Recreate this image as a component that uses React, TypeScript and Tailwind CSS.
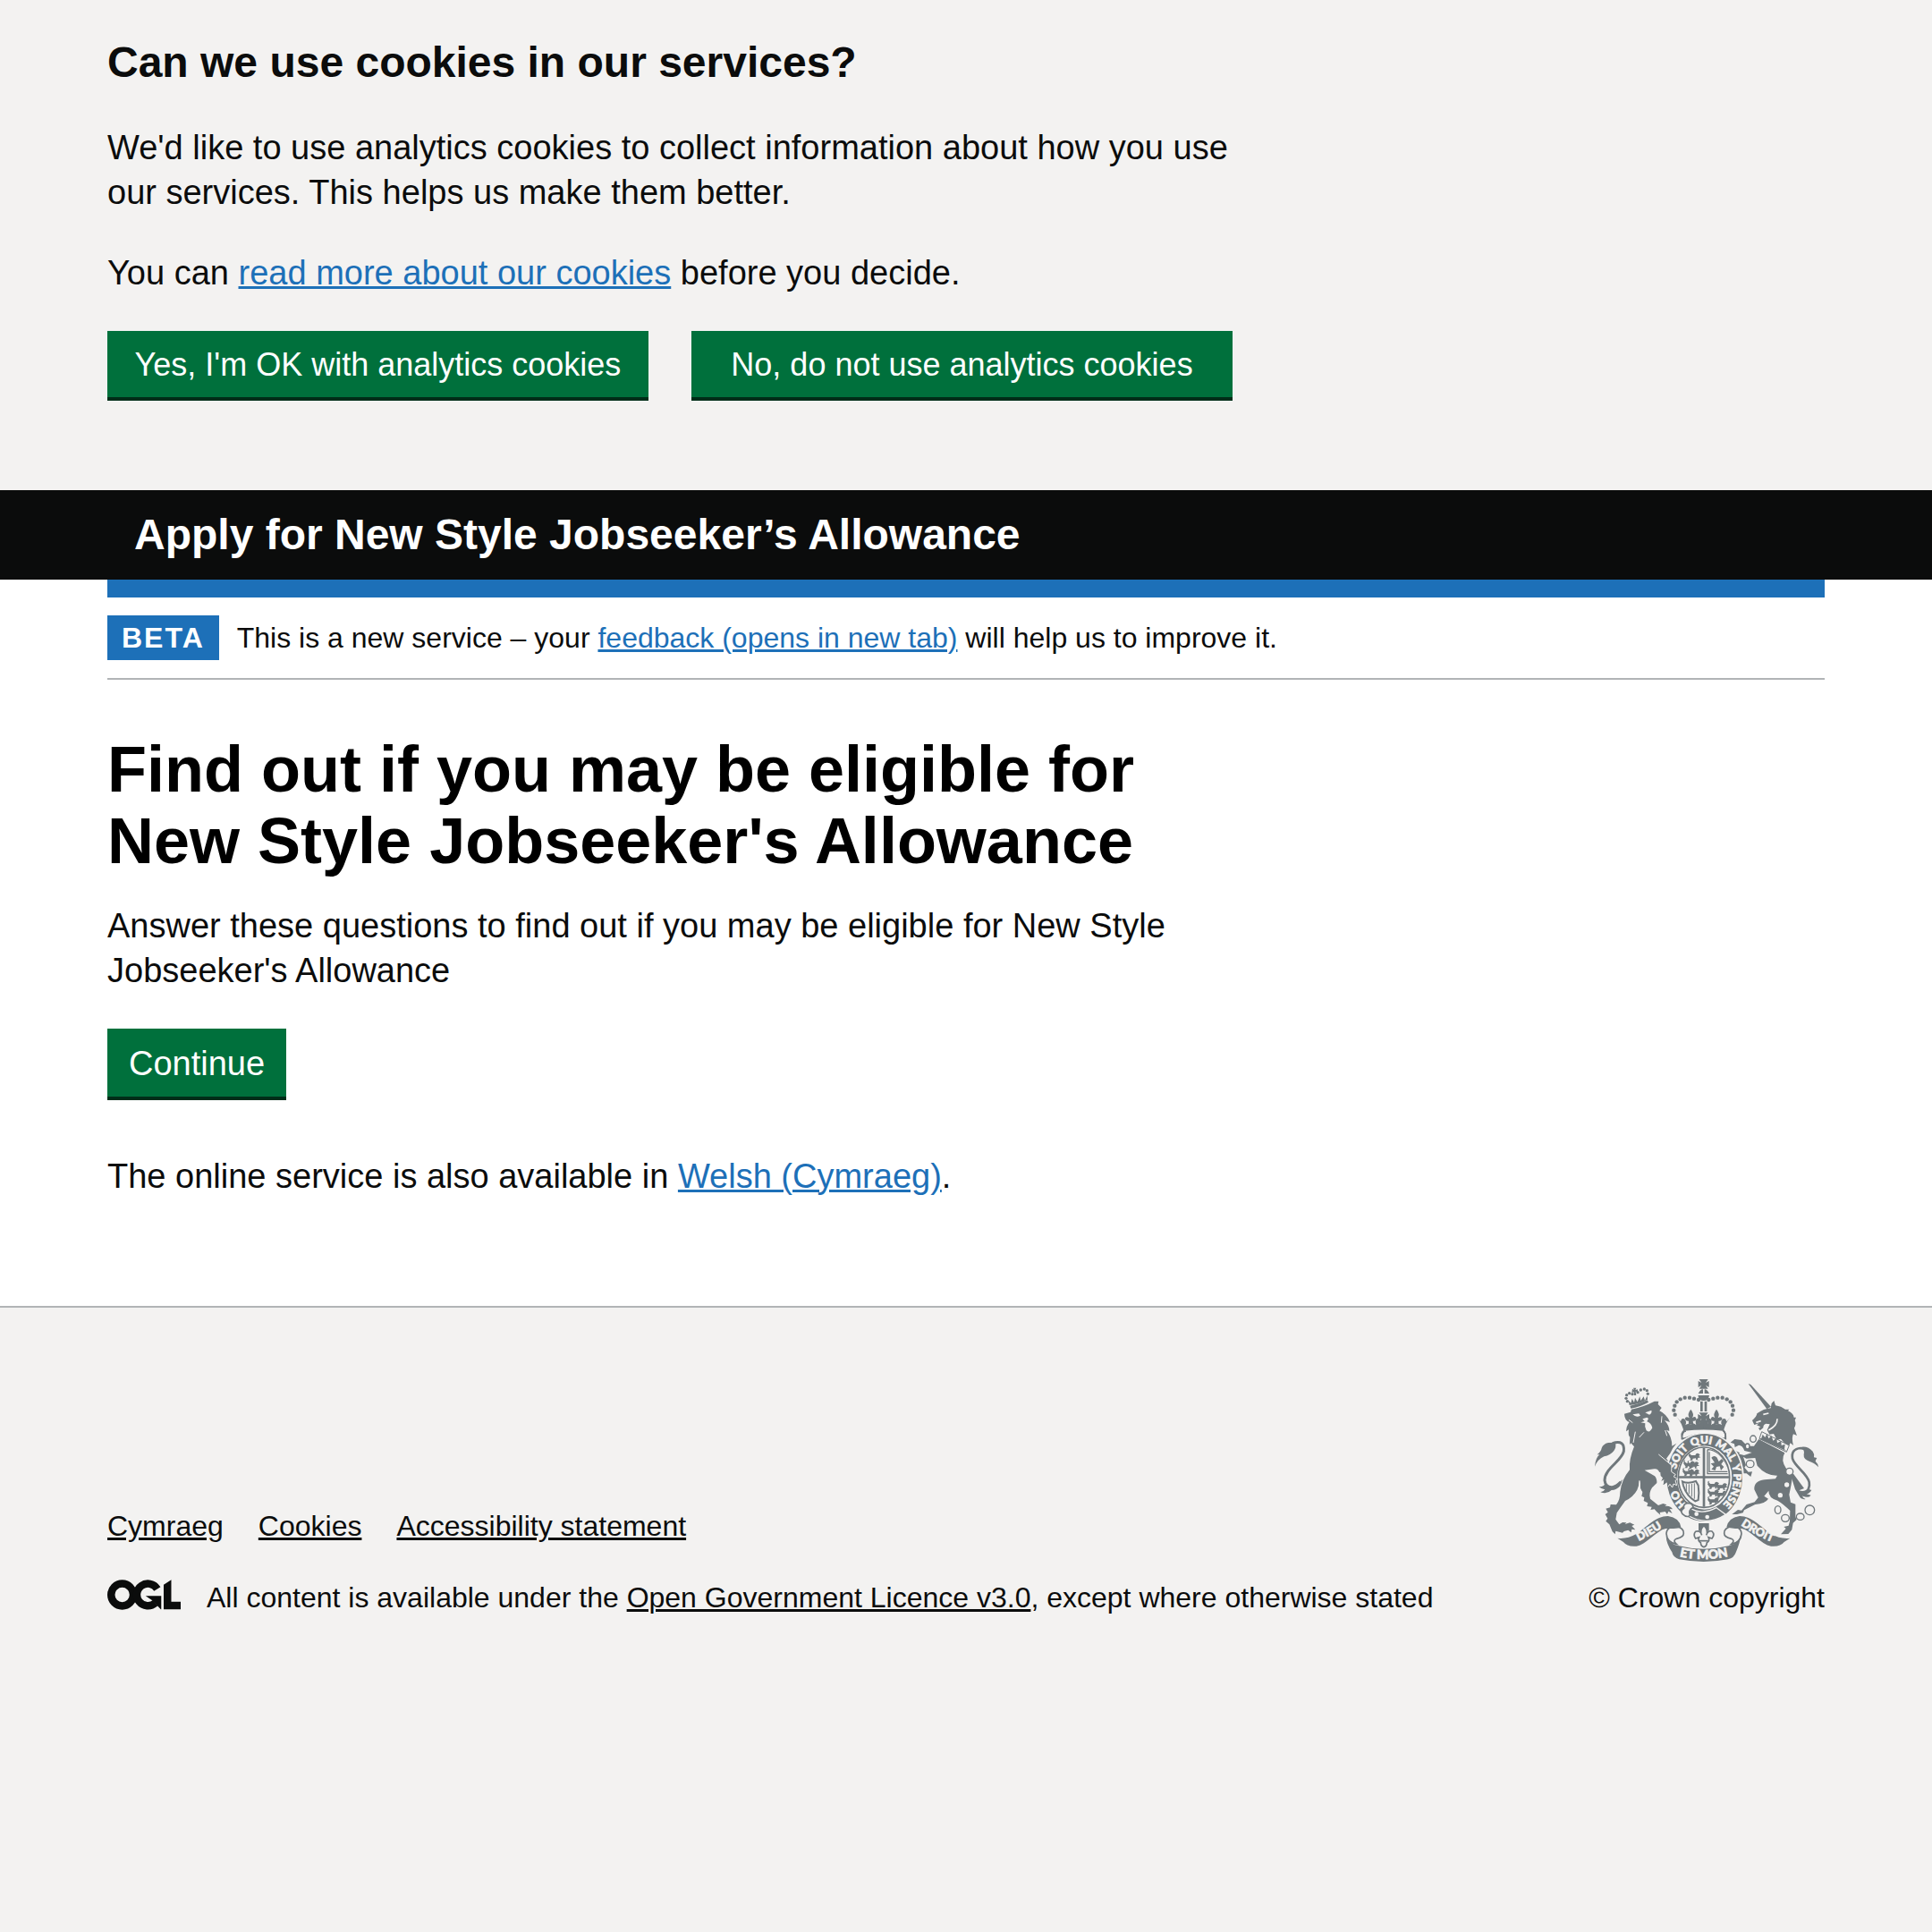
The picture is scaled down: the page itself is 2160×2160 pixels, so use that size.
import React from "react";

const INK = "#6f777b";
const PAPER = "#f3f2f1";

function OglLogo() {
  return (
    <svg aria-label="Open Government Licence" role="img" viewBox="0 0 483 196" className="h-[34px] w-[82px] shrink-0" fill="none" stroke="#0b0c0c" strokeWidth="50">
      <circle cx="98" cy="98" r="73" />
      <path d="M329 59A73 73 0 1 0 316 152" />
      <path d="M252 106h103v88h-3l-54 -58z" fill="#0b0c0c" stroke="none" />
      <path d="M371 32L421 0V143H483V194H371z" fill="#0b0c0c" stroke="none" />
    </svg>
  );
}

const PEARLS = [[387, 105], [372, 101], [357, 98], [341, 98], [326, 103], [314, 112], [307, 125], [304, 140], [308, 155]];

function CrownHalf() {
  return (
    <g>
      {PEARLS.map(([x, y]) => (
        <circle key={x + "-" + y} cx={x} cy={y} r="6.5" />
      ))}
      <path d="M314 163L327 178Q330 164 339 169Q349 178 343 190Q352 182 361 189Q371 180 379 190Q374 174 382 168Q391 165 398 177L388 184L405 180V208Q360 205 337 213Q334 186 314 163z" />
      <path d="M361 137Q374 153 366 166Q378 157 380 170Q378 178 368 176L370 188H353L354 176Q344 178 341 169Q344 158 356 166Q348 152 361 137z" />
    </g>
  );
}

function LionRow({ x, y }: { x: number; y: number }) {
  return (
    <path
      d={`M${x} ${y + 4}q5 -7 10 -1h13q3 -8 10 -6l6 4l-4 5l6 4l-9 2l-2 5l6 2h-10l-1 -6l-10 1l-2 6h-9l4 -4l-3 -5zM${x + 2} ${y + 2}q-4 -8 4 -9q-4 5 1 8z`}
    />
  );
}

function RoyalArms() {
  return (
    <svg aria-hidden="true" viewBox="39 36 750 612" className="h-[204px] w-[250px]" fill={INK} stroke="none">
      <defs>
        <path id="garter" d="M407 480A98 114 0 0 1 407 252A98 114 0 0 1 407 480" />
        <path id="dieu" d="M172 586Q225 562 279 525" />
        <path id="etmon" d="M308 627Q404 652 502 626" />
        <path id="droit" d="M517 518Q580 562 646 587" />
        <clipPath id="shield">
          <ellipse cx="405" cy="365" rx="84" ry="99" />
        </clipPath>
      </defs>

      {/* lion's tail */}
      <path d="M98 251Q141 238 136 278C128 312 72 335 72 375Q75 400 98 398Q112 395 126 380" fill="none" stroke={INK} strokeWidth="9" />
      <path d="M39 329Q42 298 55 289L47 289Q60 279 62 267Q67 253 84 249L108 248Q112 263 103 276Q92 291 70 295Q48 305 39 329z" />
      <path d="M75 385Q69 398 53 397Q63 405 73 406Q68 414 58 415Q80 423 95 408Q112 408 124 394L132 372Q96 412 75 385z" />

      {/* lion */}
      <path d="M138 152L159 146L162 137Q202 129 239 110L253 110L251 120L263 132L256 142Q280 153 291 180L273 174Q290 193 289 210L279 206Q298 229 298 260L313 251Q300 265 292 284L279 302L294 320L295 345L310 357L302 363L317 371L308 375L314 392L303 386L300 398L291 388L284 397L281 382L269 390L272 372L262 378L270 360L260 352L270 347L256 348Q250 334 238 337L206 341Q226 352 240 361Q248 370 247 384L231 400Q219 418 225 437L252 459L268 453L280 457L274 462Q293 459 300 472L290 471L299 486L286 479L282 489L275 480L257 483L259 491Q246 482 239 472L226 474L230 464L214 462L217 451L203 444L205 433L196 428L199 414L191 402L192 376L181 407Q169 430 141 444L126 465L113 484L109 506L121 523L132 516L145 517L140 522L157 517L172 524L163 528L175 541L163 539L161 550L151 542L137 546L132 551L109 545L107 556L98 547L88 523L76 512L82 503L74 489L83 482L76 470L90 466L92 456L111 457Q124 441 124 414Q128 374 156 340Q153 305 171 262L160 250L156 256L157 230Q150 226 153 205L144 211Q145 192 155 180Q139 174 138 152z" />
      <path d="M166 154L187 151L192 158Q178 166 166 154zM208 148L229 140Q232 149 222 155z" fill={PAPER} />
      <path d="M199 169L214 164L219 168L214 178Q228 183 232 199Q223 218 212 208Q205 196 208 184L193 181L206 177z" fill={PAPER} />
      <path d="M189 376Q186 397 197 421" fill="none" stroke={PAPER} strokeWidth="4" />
      <path d="M175 212L168 249M204 214L188 231M264 160L262 182M153 172L166 182M275 207L281 226" fill="none" stroke={PAPER} strokeWidth="3" />

      {/* lion's crown */}
      <g>
        <path d="M157 125Q184 120 215 106L219 113Q188 130 160 134z" />
        <path d="M155 123L151 106L160 116L164 101L171 114L174 98L182 112L190 94L193 108L203 94L207 107L215 91L216 104Q187 120 155 123z" />
        <path d="M165 68L171 72L168 65H178L175 72L183 70V79L176 77L178 90H171L170 79L163 81z" />
        {[[144, 100], [146, 89], [155, 83], [165, 86], [183, 80], [193, 72], [205, 69], [214, 74], [217, 85], [148, 110]].map(([x, y]) => (
          <circle key={x} cx={x} cy={y} r="5" />
        ))}
      </g>

      {/* unicorn's tail */}
      <path d="M737 427Q763 406 758 381C750 350 710 330 702 302Q697 270 729 267L752 272" fill="none" stroke={INK} strokeWidth="8" />
      <path d="M732 263Q754 260 770 278Q777 288 774 298L784 300Q780 306 779 311Q789 320 789 331Q775 316 760 312Q738 305 740 288Q744 276 732 263z" />
      <path d="M724 409Q744 416 757 399Q757 408 766 407Q762 417 749 421L764 425Q754 437 736 427Q736 435 746 438Q731 441 724 427L711 405L697 361L704 352L741 402z" />

      {/* unicorn's head */}
      <path d="M554 51L562 54L630 128L616 136z" />
      <path d="M567 174Q583 160 583 151Q605 135 629 133L632 117L640 108L645 124Q665 127 678 137L691 137L687 142Q705 150 707 164L714 164L710 174Q716 186 708 200L717 225L705 220Q698 231 705 258L695 250L690 260Q673 251 663 236L650 240L639 219L625 221L617 206L626 187L613 185Q603 189 604 199L593 208L588 200L595 196L582 190L590 184L574 189z" />
      <path d="M651 169Q652 191 622 207M604 154L622 150M580 181L596 176" fill="none" stroke={PAPER} strokeWidth="5" />

      {/* collar */}
      <path d="M599 212L691 258L682 280L591 235z" fill={PAPER} stroke={INK} strokeWidth="3" />
      <path d="M598 233L602 221L610 231L617 218L622 235L632 226L637 242L649 233L651 250L664 243L665 258L677 254L675 271L682 277L592 237z" />

      {/* unicorn's body and legs */}
      <path d="M589 237L676 283Q662 307 680 334L703 358L697 394L691 423L696 449L712 455V497L716 507L704 518L700 541L688 555L663 556L680 537L673 531L689 527L693 512L694 477Q671 454 652 443Q621 434 622 410L607 428L621 437Q611 453 577 456L540 475L536 484L516 489H499L519 474L531 476L548 456L575 448L587 433L574 406Q572 377 608 373L645 370L651 359Q613 360 584 326L577 300L547 302L537 296L546 324L541 332L554 347L567 346L562 363L548 352L532 352L520 337L524 329L510 322L519 310L508 298L519 286L540 291L566 282L541 276Q534 257 522 257L509 264L507 253L494 248L508 237L531 240L551 260L573 260z" />
      <path d="M500 270L525 283L513 300L495 285z" />

      {/* chain */}
      <g fill={PAPER} stroke={INK} strokeWidth="4">
        <ellipse cx="570" cy="236" rx="10" ry="11" />
        <ellipse cx="551" cy="261" rx="7" ry="9" />
        <ellipse cx="560" cy="320" rx="13" ry="12" />
        <circle cx="692" cy="346" r="12" />
        <circle cx="683" cy="390" r="10" />
        <circle cx="661" cy="425" r="10" />
        <ellipse cx="653" cy="474" rx="10" ry="13" />
        <ellipse cx="678" cy="502" rx="13" ry="12" />
        <ellipse cx="728" cy="497" rx="13" ry="11" />
        <circle cx="760" cy="475" r="16" />
      </g>

      {/* crown */}
      <path d="M389 36H419L411 48L422 42V63L411 56L419 68H389L397 56L386 63V42L397 48z" />
      <path d="M398 70H402V84H386Q388 76 398 70zM407 70H411Q421 76 423 84H407zM385 90H423Q420 108 404 108Q388 108 385 90z" />
      <path d="M393 110H401V144H393zM407 110H415V144H407z" />
      <CrownHalf />
      <g transform="translate(808 0) scale(-1 1)">
        <CrownHalf />
      </g>
      <path d="M389 148H419L411 160L423 153V176L411 169L419 184H389L397 169L385 176V153L397 160z" />
      <path d="M340 207Q404 199 469 207Q482 218 475 236L461 232Q404 208 348 232L333 236Q326 216 340 207z" fill={PAPER} stroke={INK} strokeWidth="5" />

      {/* garter */}
      <ellipse cx="407" cy="366" rx="133" ry="151" fill={PAPER} />
      <path d="M331 238Q331 210 345 210M478 238Q480 214 468 208" fill="none" stroke={INK} strokeWidth="5" />
      <ellipse cx="407" cy="366" rx="127" ry="147" />
      <ellipse cx="407" cy="366" rx="92" ry="107" fill={PAPER} />
      <ellipse cx="405" cy="365" rx="86" ry="101" fill={PAPER} stroke={INK} strokeWidth="5" />
      <g className="font-['Lato',sans-serif] text-[36px] font-black" fill={PAPER} stroke={PAPER} strokeWidth="2" textAnchor="middle">
        <text><textPath href="#garter" startOffset="14.500%">HO</textPath></text>
        <text><textPath href="#garter" startOffset="35.300%">SOIT</textPath></text>
        <text><textPath href="#garter" startOffset="48.500%">QUI</textPath></text>
        <text><textPath href="#garter" startOffset="61%">MAL</textPath></text>
        <text><textPath href="#garter" startOffset="70.500%">Y</textPath></text>
        <text><textPath href="#garter" startOffset="81.500%">PENSE</textPath></text>
      </g>

      {/* quartered arms */}
      <g clipPath="url(#shield)">
        <path d="M401 260H409V470H401zM315 361H495V368H315z" />
        <LionRow x={353} y={288} />
        <LionRow x={336} y={314} />
        <LionRow x={333} y={341} />
        <LionRow x={349} y={316} />
        <LionRow x={351} y={342} />
        <LionRow x={417} y={384} />
        <LionRow x={417} y={410} />
        <LionRow x={417} y={436} />
        <LionRow x={444} y={388} />
        <LionRow x={444} y={414} />
        <path d="M417 272V353H485M423 280V346H484M417 272Q458 272 485 330" fill="none" stroke={INK} strokeWidth="4" />
        <path d="M430 299Q438 289 448 298L455 312L465 303L471 310L463 321L472 330L462 342L458 328L447 330L443 342L430 338L438 329L428 319L441 316z" />
        <path d="M333 379Q352 388 378 378L386 392Q390 418 386 441L376 445Q347 428 336 393z" fill="none" stroke={INK} strokeWidth="6" />
        <path d="M346 387V411M355 388V421M364 387V430M373 385V437" stroke={INK} strokeWidth="3" />
      </g>

      {/* lion's paw over the garter */}
      <path d="M253 288L297 325L296 346L310 356L303 362L317 371L309 376L314 392L303 387L299 399L291 388L284 397L281 382L269 390L272 372L260 360z" />
      <path d="M253 288L297 325L296 346L310 356L303 362L317 371L309 376L314 392L303 387L299 399L291 388L284 397" fill="none" stroke={PAPER} strokeWidth="3" />

      {/* buckle and strap */}
      <path d="M362 470Q398 492 447 467L478 490Q414 531 350 492z" stroke={PAPER} strokeWidth="4" />
      <path d="M333 488Q324 478 338 468Q334 455 350 451Q368 451 369 466Q352 475 358 493Q348 502 333 488z" fill={PAPER} stroke={INK} strokeWidth="5" />
      <circle cx="380" cy="488" r="7" fill={PAPER} />
      <circle cx="416" cy="498" r="7" fill={PAPER} />

      {/* fleur-de-lis below the garter */}
      <path d="M387 519H422V545H387z" />
      <path d="M405 526Q421 543 413 559Q419 542 432 546Q443 556 432 570L420 566Q426 578 415 584Q414 597 405 599Q395 597 394 584Q383 578 389 566L377 570Q368 558 377 547Q392 541 398 559Q389 543 405 526z" fill={PAPER} stroke={INK} strokeWidth="5" />
      <path d="M390 578H419" stroke={INK} strokeWidth="5" />

      {/* ribbon */}
      <path d="M293 500Q316 508 320 526Q280 528 279 554Q281 584 313 589Q299 577 313 571Q337 566 337 553Q337 533 311 530" fill={PAPER} stroke={INK} strokeWidth="5" />
      <path d="M516 500Q492 508 489 526Q530 528 531 554Q529 584 497 589Q511 577 497 571Q473 566 473 553Q473 533 499 530" fill={PAPER} stroke={INK} strokeWidth="5" />
      <path d="M115 569Q147 573 178 555C215 531 244 494 285 495Q322 500 328 532Q320 537 303 537L277 537C246 543 211 591 179 596Q148 599 135 582z" />
      <path d="M694 569Q661 573 631 555C594 531 565 494 524 495Q488 500 481 532Q491 535 510 537L532 537C563 543 598 591 630 596Q661 599 674 582z" />
      <path d="M278 562Q286 588 318 594Q404 616 491 594Q523 588 531 550Q526 587 512 617Q506 635 486 640Q404 656 322 640Q302 635 298 616Q279 588 278 562z" />
      <g className="font-['Lato',sans-serif] text-[38px] font-black" fill={PAPER} stroke={PAPER} strokeWidth="2" textAnchor="middle">
        <text><textPath href="#dieu" startOffset="50%">DIEU</textPath></text>
        <text className="text-[42px]"><textPath href="#etmon" startOffset="50%">ET MON</textPath></text>
        <text><textPath href="#droit" startOffset="50%">DROIT</textPath></text>
      </g>
    </svg>
  );
}

const BLUE_LINK = "text-[#1d70b8] underline decoration-[3px]";
const FOOTER_LINK = "underline decoration-[3px]";
const BUTTON = "cursor-pointer bg-[#00703c] pt-0.5 text-white shadow-[0_4px_0_#002d18]";

export default function App() {
  return (
    <div className="flex min-h-screen flex-col bg-[#f3f2f1] font-['Liberation_Sans',Arial,sans-serif] text-[38px] leading-[50px] text-[#0b0c0c]">
      <section aria-label="Cookies" className="px-[120px] pt-10 pb-[104px]">
        <div className="max-w-[1258px]">
          <h2 className="mb-10 text-5xl leading-[60px] font-bold">Can we use cookies in our services?</h2>
          <p className="mb-10">We'd like to use analytics cookies to collect information about how you use our services. This helps us make them better.</p>
          <p className="mb-10">
            You can <a href="#cookies" className={BLUE_LINK}>read more about our cookies</a> before you decide.
          </p>
          <div className="grid grid-cols-2 gap-12">
            <button type="button" className={`${BUTTON} h-[74px] text-4xl`}>Yes, I'm OK with analytics cookies</button>
            <button type="button" className={`${BUTTON} h-[74px] text-4xl`}>No, do not use analytics cookies</button>
          </div>
        </div>
      </section>

      <header className="bg-[#0b0c0c] px-[150px] py-5 text-5xl leading-[60px] font-bold text-white">
        Apply for New Style Jobseeker’s Allowance
      </header>

      <div className="bg-white px-[120px] pb-[120px]">
        <div className="h-5 bg-[#1d70b8]" />
        <div className="flex items-center gap-5 border-b-2 border-[#b1b4b6] py-5 text-[32px]">
          <strong className="bg-[#1d70b8] px-4 font-bold tracking-[2px] text-white">BETA</strong>
          <span>
            This is a new service – your <a href="#feedback" className={BLUE_LINK}>feedback (opens in new tab)</a> will help us to improve it.
          </span>
        </div>
        <main className="max-w-[1260px] pt-[60px]">
          <h1 className="mb-[30px] text-7xl leading-[80px] font-bold text-black">Find out if you may be eligible for New Style Jobseeker's Allowance</h1>
          <p className="mb-10">Answer these questions to find out if you may be eligible for New Style Jobseeker's Allowance</p>
          <button type="button" className={`${BUTTON} mb-16 block h-[76px] px-6`}>Continue</button>
          <p>
            The online service is also available in <a href="#welsh" className={BLUE_LINK}>Welsh (Cymraeg)</a>.
          </p>
        </main>
      </div>

      <footer className="flex items-end justify-between border-t-2 border-[#b1b4b6] px-[120px] pt-20 text-[32px] leading-10">
        <div>
          <nav className="mb-10 flex gap-[39px]">
            <a href="#cymraeg" className={FOOTER_LINK}>Cymraeg</a>
            <a href="#cookies" className={FOOTER_LINK}>Cookies</a>
            <a href="#accessibility" className={FOOTER_LINK}>Accessibility statement</a>
          </nav>
          <div className="flex items-start gap-[29px]">
            <OglLogo />
            <span>
              All content is available under the <a href="#licence" className={FOOTER_LINK}>Open Government Licence v3.0</a>, except where otherwise stated
            </span>
          </div>
        </div>
        <a href="#copyright" className="flex flex-col items-center gap-5">
          <RoyalArms />
          © Crown copyright
        </a>
      </footer>
    </div>
  );
}
